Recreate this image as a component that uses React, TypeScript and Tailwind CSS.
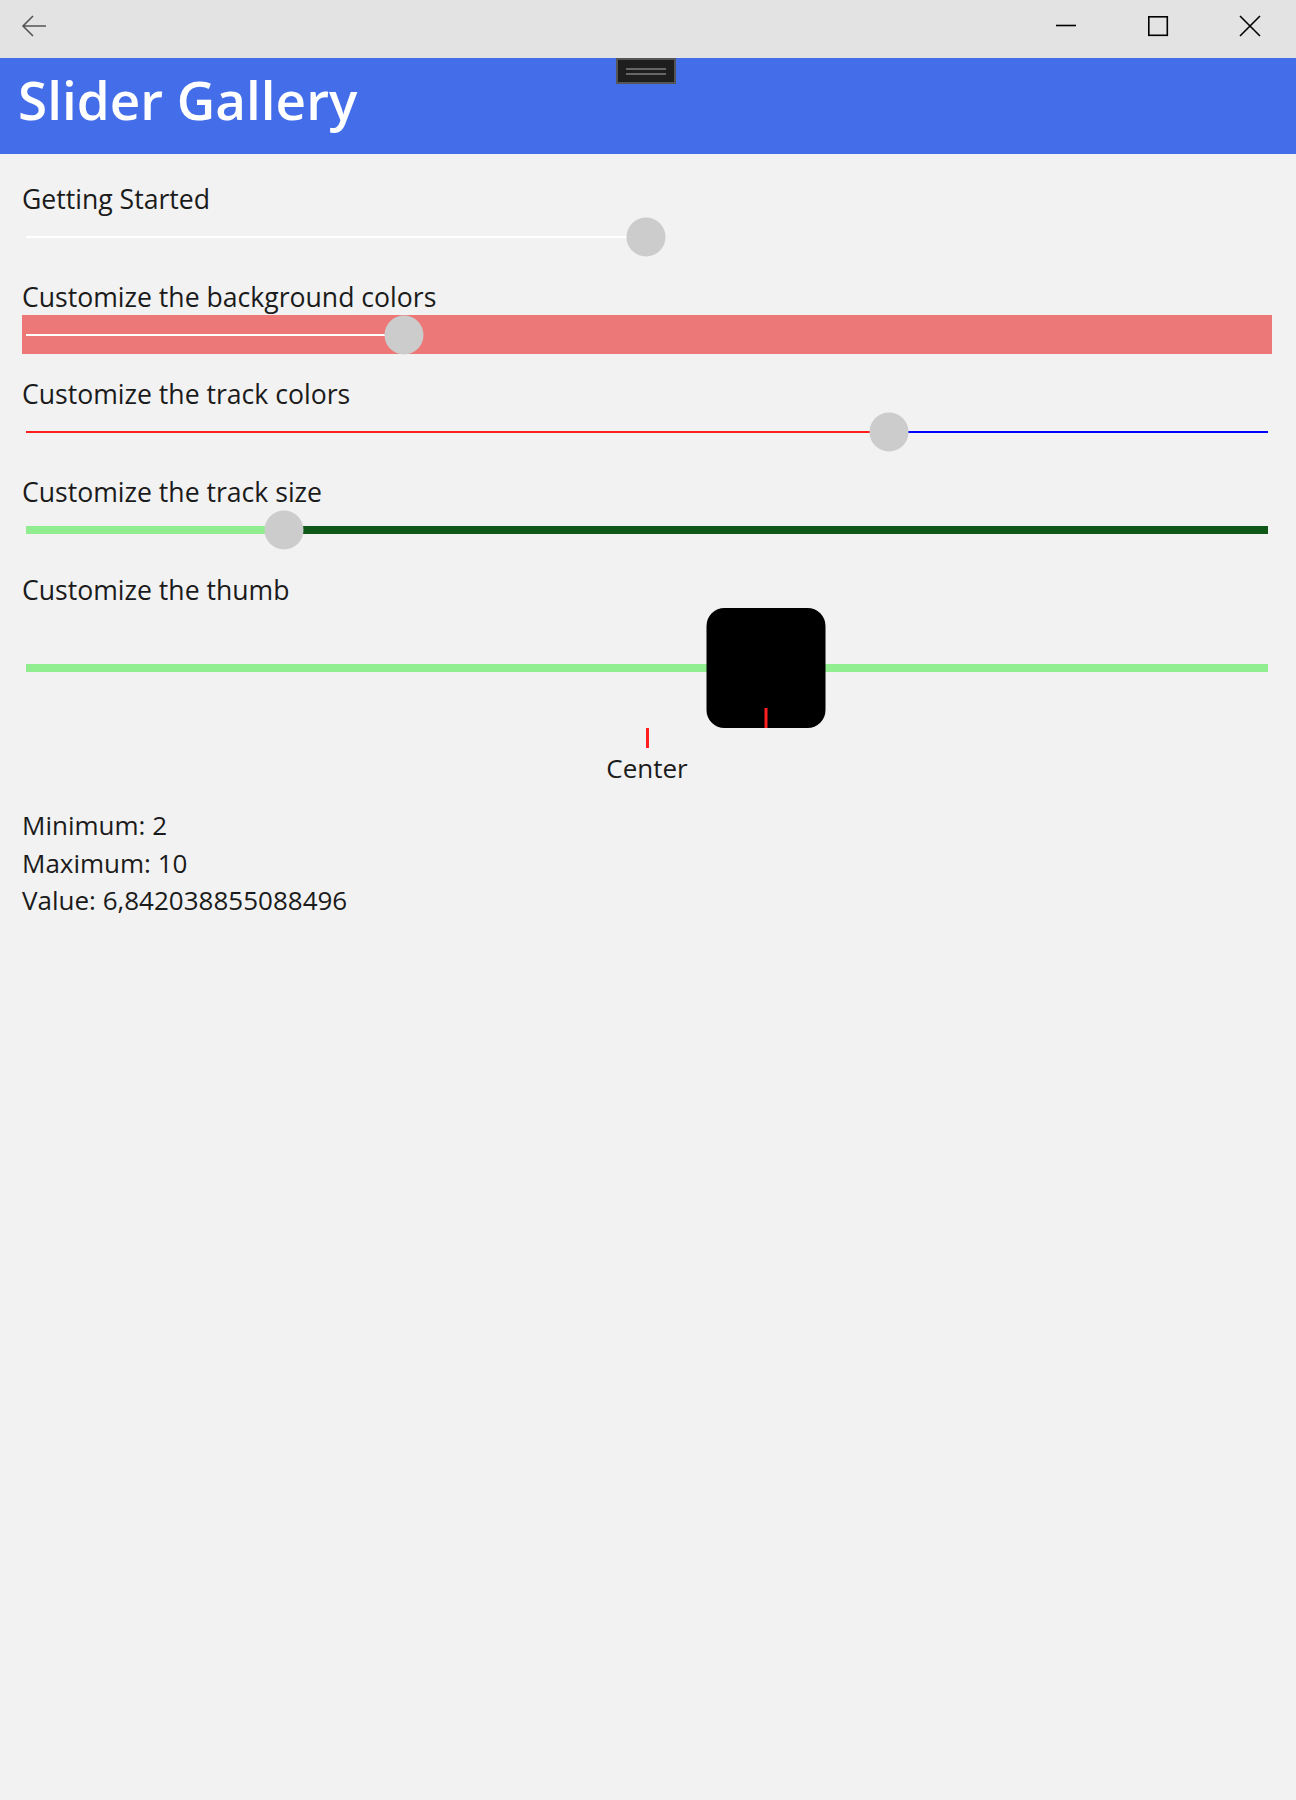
import React from "react";

type SliderProps = {
	pos: number;
	thickness: string;
	left: string;
	right: string;
	bg?: string;
	height?: string;
	children?: React.ReactNode;
};

// pos = thumb centre measured from the start of the track
const Slider = ({ pos, thickness, left, right, bg = "", height = "h-[40px]", children }: SliderProps) => {
	return (
		<div className={`relative flex items-center px-[4px] ${height} ${bg}`}>
			<div className={`${thickness} ${left}`} style={{ width: pos }} />
			<div className={`flex-1 ${thickness} ${right}`} />
			<div
				className="absolute top-1/2 -translate-x-1/2 -translate-y-1/2"
				style={{ left: pos + 4 }}
			>
				{children ?? <div className="w-[39px] h-[39px] rounded-full bg-[#cccccc]" />}
			</div>
		</div>
	);
};

const Section = ({ label, children }: { label: string; children: React.ReactNode }) => (
	<div className="flex flex-col">
		<div className="h-[36px] leading-[36px] text-[26.6px] text-[#1b1b1b]">{label}</div>
		{children}
	</div>
);

const TitleBar = () => (
	<div className="h-[58px] bg-[#e3e3e3] flex items-center justify-between">
		<svg width="80" height="58" viewBox="0 0 80 58">
			<path d="M23 26 H46 M33 16 L23 26 L33 36" fill="none" stroke="#555" strokeWidth="1.6" />
		</svg>
		<div className="flex items-center mr-[10px]">
			<svg width="92" height="58" viewBox="0 0 92 58">
				<path d="M46 25.5 H66" stroke="#000" strokeWidth="1.6" />
			</svg>
			<svg width="92" height="58" viewBox="0 0 92 58">
				<rect x="46.8" y="16.8" width="18.5" height="18.5" fill="none" stroke="#000" strokeWidth="1.6" />
			</svg>
			<svg width="92" height="58" viewBox="0 0 92 58">
				<path d="M46 16 L66 36 M66 16 L46 36" stroke="#000" strokeWidth="1.6" />
			</svg>
		</div>
	</div>
);

export default function App() {
	return (
		<div className="w-[1296px] min-h-[1800px] bg-[#f2f2f2]" style={{ fontFamily: '"Open Sans", "Noto Sans", sans-serif' }}>
			<TitleBar />
			<header className="relative h-[96px] bg-[#446ee9] pl-[18px] pt-[12px]">
				<h1 className="text-[53px] leading-[60px] font-semibold text-white">Slider Gallery</h1>
				<div className="absolute top-0 left-[616px] w-[60px] h-[26px] bg-[#1e1e1e] border-2 border-[#555] flex flex-col items-center justify-center gap-[3px]">
					<div className="w-[40px] h-[2px] bg-[#666]" />
					<div className="w-[40px] h-[2px] bg-[#666]" />
				</div>
			</header>

			<main className="pl-[22px] pr-[24px] pt-[27px] flex flex-col gap-[22px]">
				<Section label="Getting Started">
					<Slider pos={620} thickness="h-[2px]" left="bg-white" right="bg-transparent" />
				</Section>
				<Section label="Customize the background colors">
					<Slider pos={378} thickness="h-[2px]" left="bg-white" right="bg-transparent" bg="bg-[#ec7878]" height="h-[39px]" />
				</Section>
				<Section label="Customize the track colors">
					<Slider pos={863} thickness="h-[2px]" left="bg-[#ff1f1f]" right="bg-[#0000ff]" />
				</Section>
				<Section label="Customize the track size">
					<Slider pos={258} thickness="h-[8px]" left="bg-[#90ee90]" right="bg-[#0f5817]" />
				</Section>
				<div className="flex flex-col">
					<Section label="Customize the thumb">
						<Slider pos={740} thickness="h-[8px]" left="bg-[#90ee90]" right="bg-[#90ee90]" height="h-[120px]">
							<div className="w-[119px] h-[120px] rounded-[18px] bg-black flex items-end justify-center">
								<div className="w-[3px] h-[20px] bg-[#ff1f1f]" />
							</div>
						</Slider>
					</Section>
					<div className="flex flex-col items-center">
						<div className="w-[3px] h-[20px] bg-[#ff1f1f]" />
						<div className="h-[40px] leading-[40px] text-[26px] text-[#1b1b1b]">Center</div>
					</div>
					<div className="mt-[19px] text-[26px] leading-[37.5px] text-[#1b1b1b]">
						<div>Minimum: 2</div>
						<div>Maximum: 10</div>
						<div>Value: 6,842038855088496</div>
					</div>
				</div>
			</main>
		</div>
	);
}
